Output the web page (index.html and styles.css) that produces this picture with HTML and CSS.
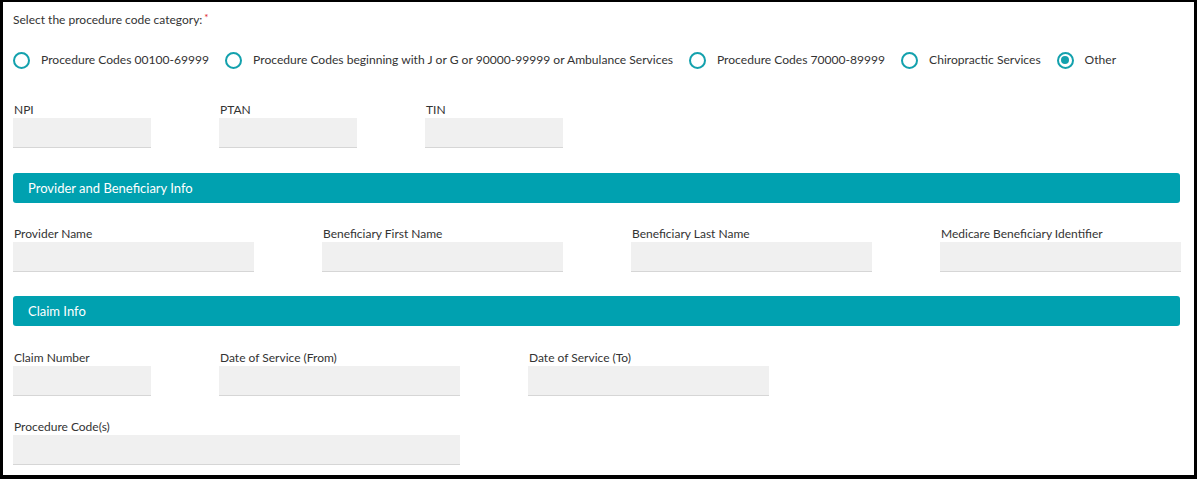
FILE: index.html
```html
<!DOCTYPE html>
<html lang="en">
<head>
<meta charset="utf-8">
<title>Procedure Code Form</title>
<link rel="stylesheet" href="styles.css">
</head>
<body>
<div class="frame">
  <div class="prompt">Select the procedure code category:<span class="req">*</span></div>
  <div class="radios">
    <label class="radio"><span class="dot"></span><span class="rtext">Procedure Codes 00100-69999</span></label>
    <label class="radio"><span class="dot"></span><span class="rtext">Procedure Codes beginning with J or G or 90000-99999 or Ambulance Services</span></label>
    <label class="radio"><span class="dot"></span><span class="rtext">Procedure Codes 70000-89999</span></label>
    <label class="radio"><span class="dot"></span><span class="rtext">Chiropractic Services</span></label>
    <label class="radio"><span class="dot checked"></span><span class="rtext">Other</span></label>
  </div>

  <div class="grid first">
    <div class="field s2"><div class="flabel">NPI</div><div class="input"></div></div>
    <div class="field s2"><div class="flabel">PTAN</div><div class="input"></div></div>
    <div class="field s2"><div class="flabel">TIN</div><div class="input"></div></div>
  </div>

  <div class="section h1">Provider and Beneficiary Info</div>
  <div class="grid after-h1">
    <div class="field s3"><div class="flabel">Provider Name</div><div class="input"></div></div>
    <div class="field s3"><div class="flabel">Beneficiary First Name</div><div class="input"></div></div>
    <div class="field s3"><div class="flabel">Beneficiary Last Name</div><div class="input"></div></div>
    <div class="field s3"><div class="flabel">Medicare Beneficiary Identifier</div><div class="input"></div></div>
  </div>

  <div class="section h2">Claim Info</div>
  <div class="grid after-h2">
    <div class="field s2"><div class="flabel">Claim Number</div><div class="input"></div></div>
    <div class="field s3"><div class="flabel">Date of Service (From)</div><div class="input"></div></div>
    <div class="field s3"><div class="flabel">Date of Service (To)</div><div class="input"></div></div>
  </div>
  <div class="grid last">
    <div class="field s5"><div class="flabel">Procedure Code(s)</div><div class="input"></div></div>
  </div>
</div>
</body>
</html>
```

FILE: styles.css
```css
* { box-sizing: border-box; }
html, body { margin: 0; padding: 0; background: #fff; }
body {
  font-family: Lato, "Open Sans", Arial, sans-serif;
  color: #333;
  font-size: 12px;
}
.frame {
  width: 1197px;
  height: 479px;
  border-style: solid;
  border-color: #000;
  border-width: 2px 3px 4px 3px;
  padding: 0 14px 10px 10px;
}
.prompt {
  margin-top: 7px;
  line-height: 16px;
  font-size: 12px;
}
.req {
  color: #e0231d;
  font-size: 10px;
  vertical-align: 3px;
  margin-left: 2px;
}
.radios {
  margin-top: 23px;
  display: flex;
  align-items: center;
  height: 18px;
}
.radio {
  display: flex;
  align-items: center;
  margin-right: 16px;
}
.dot {
  width: 17px;
  height: 17px;
  border: 2px solid #13a1ad;
  border-radius: 50%;
  display: inline-block;
  position: relative;
  flex: none;
}
.dot.checked::after {
  content: "";
  position: absolute;
  left: 2.5px;
  top: 2.5px;
  width: 8px;
  height: 8px;
  border-radius: 50%;
  background: #13a1ad;
}
.rtext {
  margin-left: 11px;
  font-size: 12.08px;
  line-height: 18px;
}
.grid {
  display: grid;
  grid-template-columns: repeat(12, 35px);
  column-gap: 68px;
}
.grid.first { margin-top: 32px; }
.grid.after-h1 { margin-top: 22px; }
.grid.after-h2 { margin-top: 23px; }
.grid.last { margin-top: 22px; }
.s2 { grid-column: span 2; }
.s3 { grid-column: span 3; }
.s5 { grid-column: span 5; }
.flabel {
  line-height: 16px;
  height: 17px;
  padding-top: 1px;
  padding-left: 1px;
  font-size: 12px;
}
.input {
  height: 30px;
  background: #f0f0f0;
  border-bottom: 1px solid #d6d6d6;
}
.section {
  height: 30px;
  width: 1167px;
  background: #00a1b0;
  color: #fff;
  border-radius: 3px;
  font-size: 13px;
  line-height: 30px;
  padding-left: 15px;
}
.section.h1 { margin-top: 25px; }
.section.h2 { margin-top: 24px; }
```
